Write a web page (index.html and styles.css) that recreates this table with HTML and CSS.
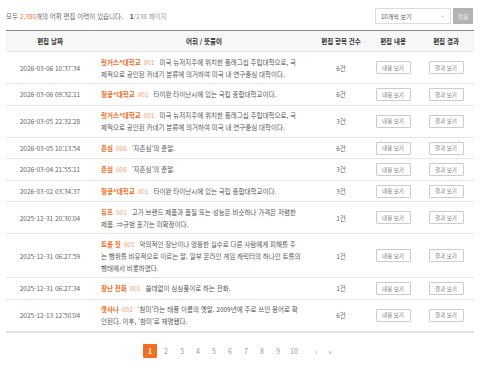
FILE: index.html
```html
<!DOCTYPE html>
<html lang="ko">
<head>
    <meta charset="UTF-8">
    <title>어휘 편집 이력</title>
    <link rel="stylesheet" href="styles.css">
</head>
<body>
    <div class="topbar">
        <p class="summary">모두 <span class="hl">2,380</span>개의 어휘 편집 이력이 있습니다. <span class="pageinfo"><b>1</b>/238 페이지</span></p>
        <div class="controls">
            <div class="select">10개씩 보기 <span class="chev">&#8964;</span></div>
            <button class="apply">적용</button>
        </div>
    </div>

    <table class="history">
        <colgroup>
            <col style="width: 88px">
            <col style="width: 220px">
            <col style="width: 54px">
            <col style="width: 50px">
            <col style="width: 56px">
        </colgroup>
        <thead>
            <tr>
                <th>편집 날짜</th>
                <th>어휘 / 뜻풀이</th>
                <th>편집 항목 건수</th>
                <th>편집 내용</th>
                <th>편집 결과</th>
            </tr>
        </thead>
        <tbody>
            <tr>
                <td class="date">2026-03-06 10:37:34</td>
                <td class="desc"><span class="word">럿거스^대학교</span><span class="num">001</span>미국 뉴저지주에 위치한 플래그십 주립대학으로, 국제적으로 공인된 카네기 분류에 의거하여 미국 내 연구중심 대학이다.</td>
                <td class="count">6건</td>
                <td><button class="view">내용 보기</button></td>
                <td><button class="view">결과 보기</button></td>
            </tr>
            <tr>
                <td class="date">2026-03-06 09:32:11</td>
                <td class="desc"><span class="word">청쿵^대학교</span><span class="num">001</span>타이완 타이난시에 있는 국립 종합대학교이다.</td>
                <td class="count">6건</td>
                <td><button class="view">내용 보기</button></td>
                <td><button class="view">결과 보기</button></td>
            </tr>
            <tr>
                <td class="date">2026-03-05 22:32:28</td>
                <td class="desc"><span class="word">럿거스^대학교</span><span class="num">001</span>미국 뉴저지주에 위치한 플래그십 주립대학으로, 국제적으로 공인된 카네기 분류에 의거하여 미국 내 연구중심 대학이다.</td>
                <td class="count">3건</td>
                <td><button class="view">내용 보기</button></td>
                <td><button class="view">결과 보기</button></td>
            </tr>
            <tr>
                <td class="date">2026-03-05 10:13:54</td>
                <td class="desc"><span class="word">존심</span><span class="num">006</span>‘자존심’의 준말.</td>
                <td class="count">6건</td>
                <td><button class="view">내용 보기</button></td>
                <td><button class="view">결과 보기</button></td>
            </tr>
            <tr>
                <td class="date">2026-03-04 21:55:11</td>
                <td class="desc"><span class="word">존심</span><span class="num">006</span>‘자존심’의 준말.</td>
                <td class="count">3건</td>
                <td><button class="view">내용 보기</button></td>
                <td><button class="view">결과 보기</button></td>
            </tr>
            <tr>
                <td class="date">2026-03-02 03:34:37</td>
                <td class="desc"><span class="word">청쿵^대학교</span><span class="num">001</span>타이완 타이난시에 있는 국립 종합대학교이다.</td>
                <td class="count">3건</td>
                <td><button class="view">내용 보기</button></td>
                <td><button class="view">결과 보기</button></td>
            </tr>
            <tr>
                <td class="date">2025-12-31 20:30:04</td>
                <td class="desc"><span class="word">듀프</span><span class="num">001</span>고가 브랜드 제품과 품질 또는 성능은 비슷하나 가격은 저렴한 제품. ⇒규범 표기는 미확정이다.</td>
                <td class="count">1건</td>
                <td><button class="view">내용 보기</button></td>
                <td><button class="view">결과 보기</button></td>
            </tr>
            <tr>
                <td class="date">2025-12-31 06:27:59</td>
                <td class="desc"><span class="word">트롤 짓</span><span class="num">001</span>악의적인 장난이나 엉뚱한 실수로 다른 사람에게 피해를 주는 행위를 비유적으로 이르는 말. 일부 온라인 게임 캐릭터의 하나인 트롤의 행태에서 비롯하였다.</td>
                <td class="count">1건</td>
                <td><button class="view">내용 보기</button></td>
                <td><button class="view">결과 보기</button></td>
            </tr>
            <tr>
                <td class="date">2025-12-31 06:27:34</td>
                <td class="desc"><span class="word">장난 전화</span><span class="num">001</span>쓸데없이 심심풀이로 하는 전화.</td>
                <td class="count">1건</td>
                <td><button class="view">내용 보기</button></td>
                <td><button class="view">결과 보기</button></td>
            </tr>
            <tr>
                <td class="date">2025-12-13 12:50:04</td>
                <td class="desc"><span class="word">캣사나</span><span class="num">002</span>‘참미’라는 태풍 이름의 옛말. 2009년에 주로 쓰인 용어로 확인된다. 이후, ‘참미’로 재명됐다.</td>
                <td class="count">6건</td>
                <td><button class="view">내용 보기</button></td>
                <td><button class="view">결과 보기</button></td>
            </tr>
        </tbody>
    </table>

    <div class="pagination">
        <a class="active" href="#">1</a>
        <a href="#">2</a>
        <a href="#">3</a>
        <a href="#">4</a>
        <a href="#">5</a>
        <a href="#">6</a>
        <a href="#">7</a>
        <a href="#">8</a>
        <a href="#">9</a>
        <a href="#">10</a>
        <a class="next" href="#">›</a>
        <a href="#">»</a>
    </div>
</body>
</html>
```

FILE: styles.css
```css
body {
    margin: 0;
    padding: 8px 6px 0;
    background-color: #ffffff;
    font-family: "Noto Sans CJK KR", "Noto Sans", sans-serif;
    font-size: 6.5px;
    color: #555;
}

.topbar {
    display: flex;
    justify-content: space-between;
    align-items: center;
    height: 16px;
    margin-bottom: 6px;
}

.summary {
    margin: 0;
    color: #666;
}

.hl {
    color: #f07a30;
}

.pageinfo {
    margin-left: 5px;
    color: #999;
}

.pageinfo b {
    color: #444;
}

.controls {
    display: flex;
    gap: 2px;
    margin-right: 1px;
}

.select {
    width: 76px;
    height: 16px;
    box-sizing: border-box;
    border: 1px solid #ddd;
    padding: 0 5px;
    display: flex;
    justify-content: space-between;
    align-items: center;
    font-size: 6px;
    color: #555;
}

.chev {
    color: #aaa;
    font-size: 6px;
    margin-top: -3px;
}

.apply {
    width: 20px;
    height: 16px;
    border: none;
    padding: 0;
    background-color: #b3b3b3;
    color: #eee;
    font-family: inherit;
    font-size: 6px;
}

.history {
    width: 468px;
    border-collapse: collapse;
    table-layout: fixed;
    border-top: 1.5px solid #8c8c8c;
    border-bottom: 2px solid #e2e2e2;
}

.history th {
    height: 20px;
    padding: 0;
    background-color: #f7f7f7;
    color: #333;
    font-weight: bold;
    border-bottom: 1px solid #e6e6e6;
}

.history td {
    padding: 3.5px 6px;
    line-height: 12px;
    text-align: center;
    border-bottom: 1px solid #e6e6e6;
    vertical-align: middle;
}

.history tr:last-child td {
    border-bottom: none;
}

.history td.date {
    color: #666;
    padding: 3.5px 2px;
}

.history td.desc {
    text-align: left;
    padding-left: 7px;
    padding-right: 13px;
    color: #555;
    word-break: break-all;
}

.word {
    color: #f06d22;
    font-weight: bold;
}

.num {
    color: #f4a070;
    margin: 0 5px 0 3px;
}

.count {
    color: #666;
}

.view {
    width: 35px;
    height: 13px;
    padding: 0;
    background-color: #fff;
    border: 1px solid #ccc;
    border-radius: 1px;
    color: #777;
    font-family: inherit;
    font-size: 5.5px;
    line-height: 10px;
}

.pagination {
    display: flex;
    justify-content: center;
    gap: 2px;
    margin-top: 11px;
}

.pagination a {
    width: 14px;
    height: 14px;
    display: flex;
    justify-content: center;
    align-items: center;
    text-decoration: none;
    color: #999;
    font-size: 7px;
}

.pagination a.active {
    background-color: #f26f21;
    color: #fff;
    font-weight: bold;
    border-radius: 1px;
}

.pagination a.next {
    margin-left: 8px;
    width: 10px;
}
```
